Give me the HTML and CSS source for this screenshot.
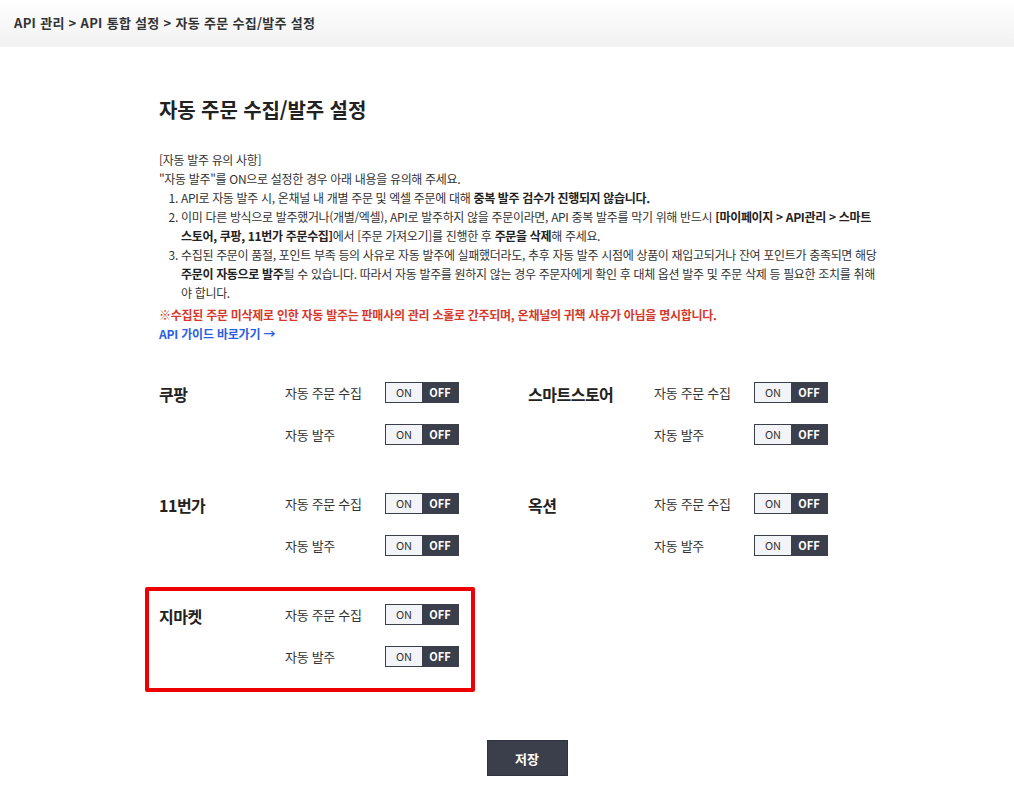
FILE: index.html
```html
<!DOCTYPE html>
<html lang="ko">
<head>
<meta charset="utf-8">
<title>자동 주문 수집/발주 설정</title>
<link rel="stylesheet" href="styles.css">
</head>
<body>
<header class="topbar">
  <div class="crumb">API 관리 &gt; API 통합 설정 &gt; 자동 주문 수집/발주 설정</div>
</header>
<main class="wrap">
  <h1 class="title">자동 주문 수집/발주 설정</h1>
  <div class="notice">
    <p class="line">[자동 발주 유의 사항]</p>
    <p class="line">"자동 발주"를 ON으로 설정한 경우 아래 내용을 유의해 주세요.</p>
    <ol class="notes">
      <li>API로 자동 발주 시, 온채널 내 개별 주문 및 엑셀 주문에 대해 <b>중복 발주 검수가 진행되지 않습니다.</b></li>
      <li>이미 다른 방식으로 발주했거나(개별/엑셀), API로 발주하지 않을 주문이라면, API 중복 발주를 막기 위해 반드시 <b>[마이페이지 &gt; API관리 &gt; 스마트</b><br><b>스토어, 쿠팡, 11번가 주문수집]</b>에서 [주문 가져오기]를 진행한 후 <b>주문을 삭제</b>해 주세요.</li>
      <li>수집된 주문이 품절, 포인트 부족 등의 사유로 자동 발주에 실패했더라도, 추후 자동 발주 시점에 상품이 재입고되거나 잔여 포인트가 충족되면 해당<br><b>주문이 자동으로 발주</b>될 수 있습니다. 따라서 자동 발주를 원하지 않는 경우 주문자에게 확인 후 대체 옵션 발주 및 주문 삭제 등 필요한 조치를 취해<br>야 합니다.</li>
    </ol>
    <p class="warn">※수집된 주문 미삭제로 인한 자동 발주는 판매사의 관리 소홀로 간주되며, 온채널의 귀책 사유가 아님을 명시합니다.</p>
    <a class="guide" href="#">API 가이드 바로가기 →</a>
  </div>

  <div class="channels">
    <section class="channel">
      <div class="ch-name">쿠팡</div>
      <div class="ch-rows">
        <div class="row"><span class="row-label">자동 주문 수집</span><div class="toggle"><span class="on">ON</span><span class="off">OFF</span></div></div>
        <div class="row"><span class="row-label">자동 발주</span><div class="toggle"><span class="on">ON</span><span class="off">OFF</span></div></div>
      </div>
    </section>
    <section class="channel">
      <div class="ch-name">스마트스토어</div>
      <div class="ch-rows">
        <div class="row"><span class="row-label">자동 주문 수집</span><div class="toggle"><span class="on">ON</span><span class="off">OFF</span></div></div>
        <div class="row"><span class="row-label">자동 발주</span><div class="toggle"><span class="on">ON</span><span class="off">OFF</span></div></div>
      </div>
    </section>
    <section class="channel">
      <div class="ch-name">11번가</div>
      <div class="ch-rows">
        <div class="row"><span class="row-label">자동 주문 수집</span><div class="toggle"><span class="on">ON</span><span class="off">OFF</span></div></div>
        <div class="row"><span class="row-label">자동 발주</span><div class="toggle"><span class="on">ON</span><span class="off">OFF</span></div></div>
      </div>
    </section>
    <section class="channel">
      <div class="ch-name">옥션</div>
      <div class="ch-rows">
        <div class="row"><span class="row-label">자동 주문 수집</span><div class="toggle"><span class="on">ON</span><span class="off">OFF</span></div></div>
        <div class="row"><span class="row-label">자동 발주</span><div class="toggle"><span class="on">ON</span><span class="off">OFF</span></div></div>
      </div>
    </section>
    <section class="channel highlight">
      <div class="ch-name">지마켓</div>
      <div class="ch-rows">
        <div class="row"><span class="row-label">자동 주문 수집</span><div class="toggle"><span class="on">ON</span><span class="off">OFF</span></div></div>
        <div class="row"><span class="row-label">자동 발주</span><div class="toggle"><span class="on">ON</span><span class="off">OFF</span></div></div>
      </div>
    </section>
  </div>

  <div class="actions"><button class="save" type="button">저장</button></div>
</main>
</body>
</html>
```
FILE: styles.css
```css
*, *::before, *::after { box-sizing: border-box; }
html, body { margin: 0; padding: 0; background: #fff; }
body {
  font-family: "Noto Sans CJK KR", "Noto Sans", sans-serif;
  color: #333;
  width: 1014px;
}
.topbar {
  height: 47px;
  background: linear-gradient(to bottom, #ffffff 0%, #f1f1f1 100%);
  display: flex;
  align-items: center;
  padding-left: 14px;
  padding-bottom: 3px;
}
.crumb {
  font-size: 13px;
  font-weight: 700;
  color: #333;
  letter-spacing: 0.3px;
}
.wrap {
  width: 736px;
  margin-left: 159px;
  padding-top: 50px;
  padding-bottom: 20px;
}
.title {
  margin: 0 0 27px 0;
  font-size: 20px;
  line-height: 26px;
  font-weight: 700;
  color: #222;
  letter-spacing: -0.1px;
}
.notice {
  font-size: 12px;
  line-height: 19px;
  color: #333;
  letter-spacing: -0.33px;
}
.notice .line { margin: 0; white-space: nowrap; }
.notes {
  margin: 0;
  padding-left: 22px;
}
.notes li { white-space: nowrap; }
.notes b { font-weight: 700; color: #222; }
.warn {
  margin: 3px 0 0 0;
  color: #d43a2c;
  font-weight: 700;
  white-space: nowrap;
  letter-spacing: -0.27px;
}
.guide {
  display: inline-block;
  color: #2d5ee0;
  font-weight: 700;
  text-decoration: none;
  letter-spacing: -0.2px;
}
.channels {
  margin-top: 39px;
  display: grid;
  grid-template-columns: 369px 300px;
  row-gap: 48px;
}
.channel {
  display: flex;
  position: relative;
}
.ch-name {
  width: 126px;
  font-size: 16px;
  font-weight: 700;
  line-height: 21px;
  padding-top: 2px;
  color: #222;
  letter-spacing: -0.5px;
}
.ch-rows {
  display: flex;
  flex-direction: column;
  gap: 21px;
}
.row {
  display: flex;
  align-items: center;
  height: 21px;
}
.row-label {
  width: 100px;
  font-size: 13px;
  color: #333;
  letter-spacing: -0.3px;
}
.toggle {
  display: flex;
  width: 74px;
  height: 21px;
  border: 1px solid #3b3f4c;
  font-size: 11px;
  line-height: 19px;
}
.toggle span {
  flex: 1;
  text-align: center;
}
.toggle .on { background: #f3f4f7; color: #333; }
.toggle .off { background: #3b3f4c; color: #fff; font-weight: 700; }
.highlight::after {
  content: "";
  position: absolute;
  left: -14px;
  top: -17px;
  width: 330px;
  height: 105px;
  border: 4px solid #ee0000;
  border-radius: 2px;
  pointer-events: none;
}
.actions {
  margin-top: 73px;
  display: flex;
  justify-content: center;
}
.save {
  width: 81px;
  height: 36px;
  border: 1px solid #2f3340;
  background: #3b3f4c;
  color: #fff;
  font-family: "Noto Sans CJK KR", sans-serif;
  font-size: 13px;
  font-weight: 700;
  cursor: pointer;
}
```
